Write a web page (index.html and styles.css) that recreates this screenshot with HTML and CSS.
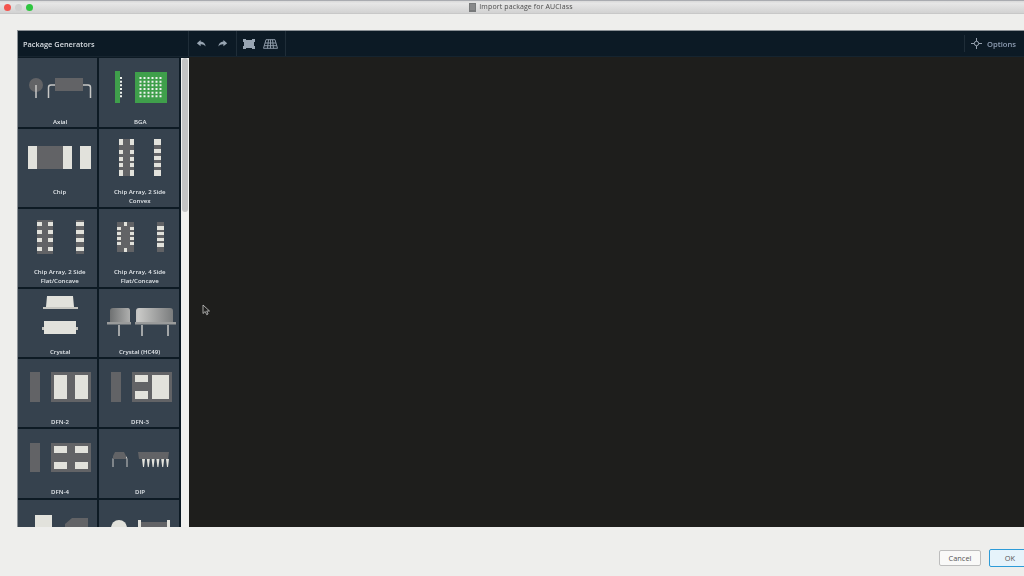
FILE: index.html
```html
<!DOCTYPE html>
<html lang="en">
<head>
<meta charset="utf-8">
<title>Import package for AUClass</title>
<link rel="stylesheet" href="styles.css">
</head>
<body>
<div class="window">
  <header class="titlebar">
    <div class="lights"><span class="light red"></span><span class="light grey"></span><span class="light green"></span></div>
    <div class="title">
      <svg class="doc" viewBox="0 0 7 9"><rect width="7" height="9" fill="#77797a"/><path d="M1 2h5M1 4h5M1 6h5" stroke="#a9aaaa" stroke-width=".7"/></svg>
      <span>Import package for AUClass</span>
    </div>
  </header>
  <main class="content">
    <section class="panel">
      <div class="bar">
        <div class="bar-title"><span class="soft">Package Generators</span></div>
        <div class="tools">
          <svg class="tool" viewBox="0 0 12 10"><path class="ic" d="M5 1 .8 4.6 5 8V5.800c2.400-.2 4 .5 5.600 2.600-.3-3.300-2.400-5.300-5.600-5.500z"/></svg>
          <svg class="tool" viewBox="0 0 12 10"><path class="ic" d="M7 1l4.200 3.600L7 8V5.800c-2.400-.2-4 .5-5.600 2.600C1.700 5.100 3.800 3.100 7 2.900z"/></svg>
        </div>
        <div class="tools tools-b">
          <svg class="tool wide" viewBox="0 0 12 10"><path class="ic" d="M0 0h3v1h6V0h3v3h-1v4h1v3H9V9H3v1H0V7h1V3H0z"/></svg>
          <svg class="tool wider" viewBox="0 0 15 10"><path class="ln" d="M3 .7h9l2.500 8.600H.5zM2 4h11M1.200 6.700h12.600M5.500.7 4.500 9.300M7.500.7v8.600M9.500.7l1 8.600"/></svg>
        </div>
        <div class="options">
          <svg class="cross" viewBox="0 0 12 12"><circle cx="6" cy="6" r="2.400" class="ln lit"/><path class="ln lit" d="M6 0v3.500M6 8.500V12M0 6h3.500M8.500 6H12"/></svg>
          <span class="soft">Options</span>
        </div>
      </div>
      <div class="work">
        <aside class="side">
          <div class="cards">
            <div class="card">
              <svg class="art" viewBox="18 58 79 57"><circle cx="36" cy="85" r="7" class="d"/><path class="lead" d="M36 85v13M55 85h-4q-2.500 0-2.500 2.500V98M83 85h5q2.500 0 2.500 2.500V98"/><rect x="55" y="78" width="28" height="13" class="d"/></svg>
              <div class="name">Axial</div>
            </div>
            <div class="card">
              <svg class="art" viewBox="99 58 80 57"><rect x="115" y="71" width="5" height="32" class="g"/><path class="dots" d="M121 77v22"/><rect x="135" y="72" width="32" height="31" class="g"/><path class="dots" d="M140.500 77v22M144.500 77v22M148.500 77v22M152.500 77v22M156.500 77v22M160.500 77v22"/></svg>
              <div class="name">BGA</div>
            </div>
            <div class="card">
              <svg class="art" viewBox="18 129 79 57"><rect x="28" y="146" width="44" height="23" class="d"/><rect x="28" y="146" width="9" height="23" class="w"/><rect x="63" y="146" width="9" height="23" class="w"/><rect x="80" y="146" width="11" height="23" class="w"/></svg>
              <div class="name">Chip</div>
            </div>
            <div class="card">
              <svg class="art" viewBox="99 129 80 57"><rect x="119" y="139" width="15" height="37" class="d"/><path class="w" d="M119 139h4v6h-4zM130 139h4v6h-4zM119 150h4v4h-4zM130 150h4v4h-4zM119 157h4v4h-4zM130 157h4v4h-4zM119 163h4v4h-4zM130 163h4v4h-4zM119 170h4v6h-4zM130 170h4v6h-4z"/><rect x="154" y="139" width="7" height="37" class="d"/><path class="w" d="M154 139h7v6h-7zM154 149h7v4h-7zM154 156h7v4h-7zM154 163h7v4h-7zM154 170h7v6h-7z"/></svg>
              <div class="name">Chip Array, 2 Side<br>Convex</div>
            </div>
            <div class="card">
              <svg class="art" viewBox="18 209 79 57"><rect x="37" y="220" width="16" height="34" class="d"/><path class="w" d="M37 222h5v4h-5zM48 222h5v4h-5zM37 230h5v4h-5zM48 230h5v4h-5zM37 238h5v4h-5zM48 238h5v4h-5zM37 247h5v4h-5zM48 247h5v4h-5z"/><rect x="76" y="220" width="8" height="34" class="d"/><path class="w" d="M76 222h8v4h-8zM76 230h8v4h-8zM76 238h8v4h-8zM76 247h8v4h-8z"/></svg>
              <div class="name">Chip Array, 2 Side<br>Flat/Concave</div>
            </div>
            <div class="card">
              <svg class="art" viewBox="99 209 80 57"><rect x="117" y="222" width="17" height="30" class="d"/><path class="w" d="M117 227h4v3h-4zM130 227h4v3h-4zM117 232h4v3h-4zM130 232h4v3h-4zM117 237h4v3h-4zM130 237h4v3h-4zM117 242h4v3h-4zM130 242h4v3h-4zM124 222h3v4h-3zM124 248h3v4h-3z"/><rect x="157" y="222" width="7" height="30" class="d"/><path class="w" d="M157 226h7v4h-7zM157 232h7v3h-7zM157 238h7v3h-7zM157 243h7v4h-7z"/></svg>
              <div class="name">Chip Array, 4 Side<br>Flat/Concave</div>
            </div>
            <div class="card">
              <svg class="art" viewBox="18 289 79 57"><defs><linearGradient id="can" x1="0" x2="1" y1="0" y2="0"><stop offset="0" stop-color="#6f7172"/><stop offset=".45" stop-color="#c9c9c7"/><stop offset="1" stop-color="#7a7c7d"/></linearGradient></defs><path class="w" d="M47 296h26l1 11H46z"/><rect x="43" y="307" width="35" height="2" class="m"/><rect x="42" y="327" width="36" height="3" class="m"/><rect x="44" y="321" width="32" height="13" class="w"/></svg>
              <div class="name">Crystal</div>
            </div>
            <div class="card">
              <svg class="art" viewBox="99 289 80 57"><path class="can" d="M110 311q0-3 3-3h15q2 0 2 3v11h-20zM136 311q0-3 3-3h31q3 0 3 3v11h-37z"/><path class="f" d="M107 322h24v2.500h-24zM135 322h41v2.500h-41z"/><path class="lead" d="M119 325v11M142 325v11M168 325v11"/></svg>
              <div class="name">Crystal (HC49)</div>
            </div>
            <div class="card">
              <svg class="art" viewBox="18 359 79 57"><rect x="30" y="372" width="10" height="30" class="d"/><rect x="51" y="372" width="40" height="30" class="d"/><rect x="54" y="375" width="13" height="24" class="w"/><rect x="75" y="375" width="13" height="24" class="w"/></svg>
              <div class="name">DFN-2</div>
            </div>
            <div class="card">
              <svg class="art" viewBox="99 359 80 57"><rect x="111" y="372" width="10" height="30" class="d"/><rect x="132" y="372" width="40" height="30" class="d"/><rect x="135" y="375" width="13" height="7" class="w"/><rect x="135" y="391" width="13" height="8" class="w"/><rect x="152" y="375" width="17" height="24" class="w"/></svg>
              <div class="name">DFN-3</div>
            </div>
            <div class="card">
              <svg class="art" viewBox="18 429 79 57"><rect x="30" y="443" width="10" height="29" class="d"/><rect x="51" y="443" width="40" height="29" class="d"/><path class="w" d="M54 446h13v7H54zM75 446h13v7H75zM54 462h13v7H54zM75 462h13v7H75z"/></svg>
              <div class="name">DFN-4</div>
            </div>
            <div class="card">
              <svg class="art" viewBox="99 429 80 57"><path class="lead thin" d="M113 467v-8q0-3 3-3h8q3 0 3 3v8"/><path class="d" d="M115 452h9l2 4v3h-13v-3z"/><path class="d" d="M138 452h31l-1 7h-29z"/><path class="w" d="M142 459h3l-1 8h-1zM146.800 459h3l-1 8h-1zM151.600 459h3l-1 8h-1zM156.400 459h3l-1 8h-1zM161.200 459h3l-1 8h-1zM166 459h3l-1 8h-1z"/></svg>
              <div class="name">DIP</div>
            </div>
            <div class="card">
              <svg class="art" viewBox="18 500 79 57"><rect x="35" y="515" width="17" height="30" class="w"/><path class="d" d="M72 518h16v30H65v-24z"/></svg>
            </div>
            <div class="card">
              <svg class="art" viewBox="99 500 80 57"><circle cx="119" cy="528" r="8" class="w"/><rect x="138" y="522" width="32" height="30" class="d"/><rect x="138" y="520" width="3" height="30" class="w"/><rect x="167" y="520" width="3" height="30" class="w"/></svg>
            </div>
          </div>
          <div class="track"><div class="thumb"></div></div>
        </aside>
        <div class="canvas">
          <svg class="cursor" viewBox="0 0 9 12"><path d="M1 1v8.500l2.200-2 1.500 3.200 1.400-.7L4.700 7H7.500z" fill="#1e1e1c" stroke="#c9c9c9" stroke-width=".8"/></svg>
        </div>
      </div>
    </section>
  </main>
  <footer class="footer">
    <button class="btn">Cancel</button>
    <button class="btn ok">OK</button>
  </footer>
</div>
</body>
</html>
```

FILE: styles.css
```css
* { box-sizing: border-box; }
html, body { margin: 0; height: 100%; }
body { overflow: hidden; background: #eeeeec; font-family: "Open Sans", sans-serif; }
.window { width: 1024px; height: 576px; display: flex; flex-direction: column; overflow: hidden; position: relative; filter: blur(.35px); }
.soft { will-change: transform; }

.titlebar { height: 14px; flex: none; display: flex; align-items: center; justify-content: center; position: relative;
  background: linear-gradient(#d9d9d9, #e6e6e6 20%, #d2d2d2); border-top: 1px solid #a9abb0; border-bottom: 1px solid #c8c8c8; }
.lights { position: absolute; left: 3.500px; top: 2.500px; display: flex; gap: 4px; }
.light { width: 7px; height: 7px; border-radius: 50%; }
.red { background: #f4544e; }
.grey { background: #cfcfcf; }
.green { background: #2fc640; }
.title { display: flex; align-items: center; gap: 3px; margin-left: 18px; font-size: 7px; line-height: 10px; color: #4c4c4c; letter-spacing: .12px; }
.doc { width: 7px; height: 9px; display: block; }

.content { flex: 1; min-height: 0; padding: 16px 0 0 17px; display: flex; }
.panel { flex: 1; min-width: 0; display: flex; flex-direction: column; background: #0d1a24; border-top: 1px solid #8b9196; border-left: 1px solid #8b9196; }

.bar { height: 26px; flex: none; display: flex; align-items: stretch; background: #0c1a25; border-bottom: 1px solid #16242f; }
.bar-title { width: 171px; flex: none; padding: 0 0 0 5px; display: flex; align-items: center; font-size: 7.400px; font-weight: 600; color: #d8dde2; border-right: 1px solid #1f2d38; }
.tools { width: 48px; flex: none; display: flex; align-items: center; justify-content: center; gap: 10px; border-right: 1px solid #1f2d38; padding-right: 2px; }
.tools-b { width: 49px; gap: 8px; }
.tool { width: 11px; height: 9px; display: block; }
.wide { width: 12px; height: 10px; }
.wider { width: 15px; height: 10px; }
.ic { fill: #98a5b2; }
.ln { fill: none; stroke: #97a4b2; stroke-width: .9; }
.lit { stroke: #b4bfcc; }
.options { margin: 4px 0 4px auto; width: 60px; flex: none; display: flex; align-items: center; gap: 5px; padding-left: 6px; border-left: 1px solid #1f2d38; font-size: 7.600px; font-weight: 600; color: #8e9db3; }
.cross { width: 11px; height: 11px; display: block; flex: none; }

.work { flex: 1; min-height: 0; display: flex; }
.side { width: 171px; flex: none; display: flex; overflow: hidden; background: #0d1a24; padding-top: 1px; }
.cards { width: 162px; flex: none; display: grid; grid-template-columns: 79px 80px; column-gap: 2px; row-gap: 2px;
  grid-template-rows: 69px 78px 78px 68px 68px 69px 80px; }
.card { background: #36424e; display: flex; flex-direction: column; align-items: center; overflow: hidden; }
.art { width: 100%; height: 57px; flex: none; display: block; }
.name { margin-top: 1px; padding-left: 2px; font-size: 6.100px; line-height: 9px; font-weight: 600; color: #e2e6ea; text-align: center; white-space: nowrap; will-change: transform; }
.card:nth-child(odd) .name { padding-left: 5px; }
.card:nth-child(-n+2) .name { margin-top: 2px; }
.track { width: 8px; flex: none; background: #f1f1ef; padding: 0 1px; margin-left: 1px; }
.thumb { height: 154px; background: #c4c4c4; border-radius: 3px; }

.d { fill: #626366; }
.w { fill: #e2e2dc; }
.m { fill: #c7c7c2; }
.f { fill: #9a9b9b; }
.g { fill: #3f9f4b; }
.can { fill: url(#can); }
.lead { fill: none; stroke: #c8c8c6; stroke-width: 1.500; }
.thin { stroke-width: 1; }
.dots { fill: none; stroke: #eef2ee; stroke-width: 2; stroke-dasharray: 2 1.670; }

.canvas { flex: 1; min-width: 0; background: #1e1e1c; position: relative; }
.cursor { position: absolute; left: 13px; top: 247px; width: 9px; height: 12px; }

.footer { height: 49px; flex: none; display: flex; justify-content: flex-end; align-items: flex-start; gap: 8px; padding: 22px 0 0; margin-right: -6px; }
.btn { width: 42px; height: 16px; margin-top: 1px; padding: 0; font: 7.400px/14px "Open Sans", sans-serif; color: #555; background: #f9f9f8; border: 1px solid #bdbdbd; border-radius: 2px; }
.ok { width: 41px; height: 18px; margin-top: 0; background: #e6f3fb; border: 1.500px solid #2d9bd8; padding-left: 1px; }
```
